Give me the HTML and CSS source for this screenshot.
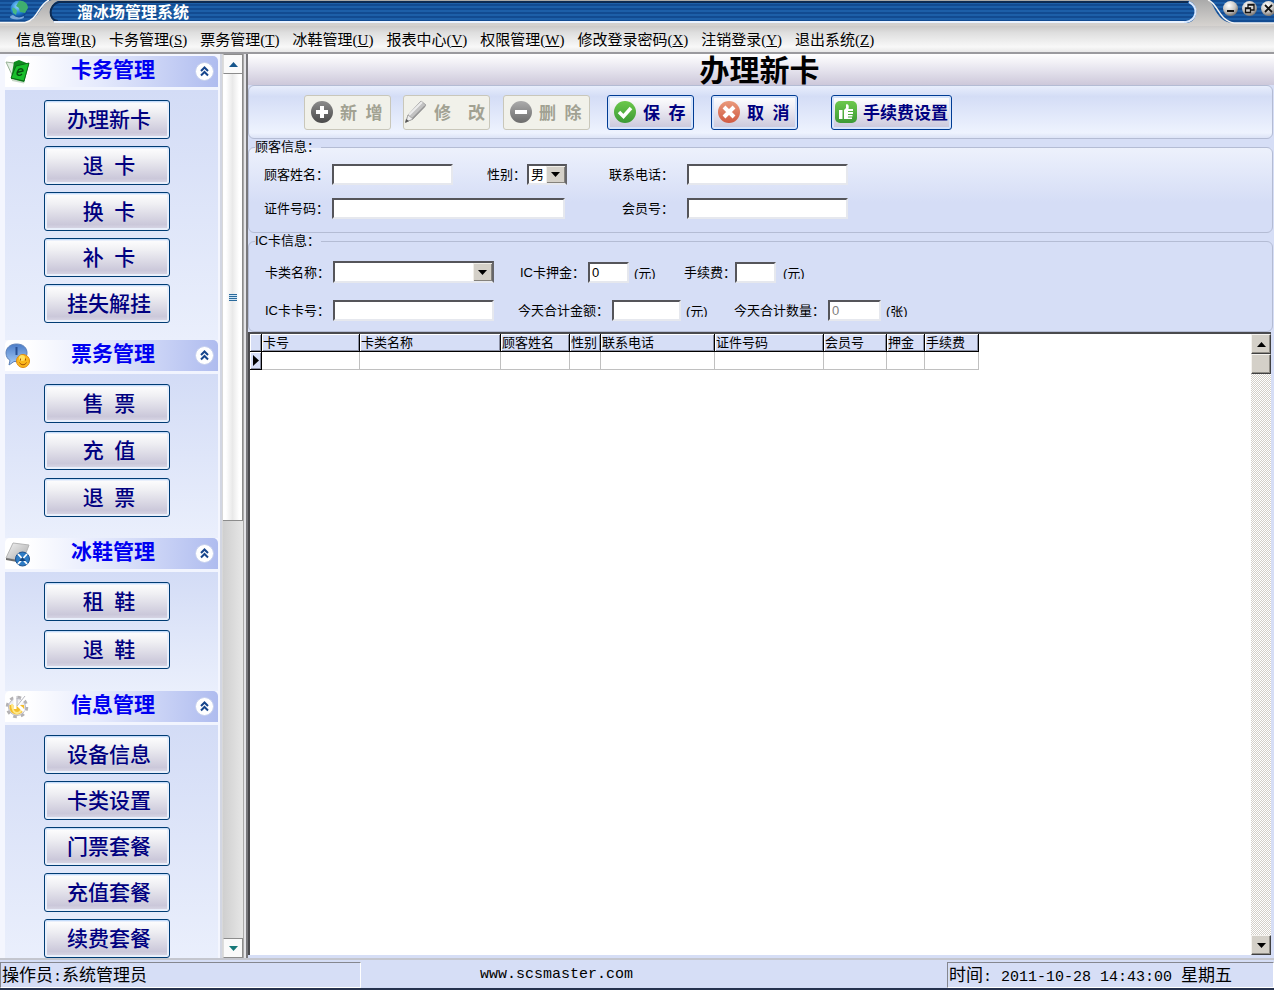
FILE: index.html
```html
<!DOCTYPE html>
<html lang="zh-CN">
<head>
<meta charset="utf-8">
<title>溜冰场管理系统</title>
<link rel="stylesheet" href="styles.css">
</head>
<body>
<svg width="0" height="0" class="defs" aria-hidden="true">
  <defs>
    <pattern id="stripes" width="4" height="4" patternUnits="userSpaceOnUse"><rect width="4" height="4" fill="#1d5fa8"/><rect width="4" height="2" fill="#124b91"/></pattern>
    <linearGradient id="metal" x1="0" y1="0" x2="0" y2="1"><stop offset="0" stop-color="#aaa"/><stop offset="1" stop-color="#d6d3d0"/></linearGradient>
    <radialGradient id="globe" cx=".4" cy=".35" r=".7"><stop offset="0" stop-color="#8fd8ff"/><stop offset=".6" stop-color="#1c7ad0"/><stop offset="1" stop-color="#0a3a80"/></radialGradient>
    <radialGradient id="ball" cx=".4" cy=".3" r=".7"><stop offset="0" stop-color="#fff"/><stop offset=".6" stop-color="#c9c7c4"/><stop offset="1" stop-color="#77736f"/></radialGradient>
    <linearGradient id="grayball" x1="0" y1="0" x2="0" y2="1"><stop offset="0" stop-color="#8c8c8c"/><stop offset="1" stop-color="#4a4a4a"/></linearGradient>
    <linearGradient id="grayball2" x1="0" y1="0" x2="0" y2="1"><stop offset="0" stop-color="#ababab"/><stop offset="1" stop-color="#6c6c6c"/></linearGradient>
    <linearGradient id="green" x1="0" y1="0" x2="0" y2="1"><stop offset="0" stop-color="#6cc84c"/><stop offset="1" stop-color="#3c9a35"/></linearGradient>
    <linearGradient id="red" x1="0" y1="0" x2="0" y2="1"><stop offset="0" stop-color="#ea9a7c"/><stop offset="1" stop-color="#d05a42"/></linearGradient>
    <linearGradient id="bubble" x1="0" y1="0" x2="0" y2="1"><stop offset="0" stop-color="#4a7cc8"/><stop offset="1" stop-color="#a9cdf5"/></linearGradient>
    <linearGradient id="sheet" x1="0" y1="0" x2="1" y2="1"><stop offset="0" stop-color="#f2f2f2"/><stop offset="1" stop-color="#a9a9a9"/></linearGradient>
    <symbol id="chev" viewBox="0 0 19 19"><circle cx="9.500" cy="9.500" r="9" fill="#fff" stroke="#c5cfee"/><path d="M6 9l3.500-3.500L13 9M6 13.500l3.500-3.500 3.500 3.500" fill="none" stroke="#16458c" stroke-width="2"/></symbol>
  </defs>
</svg>

<header class="titlebar">
  <svg class="cap" width="64" height="26" viewBox="0 0 64 26" aria-hidden="true">
    <rect width="64" height="26" fill="url(#stripes)"/>
    <path d="M52 0C41 2 39 20 27 22H0v4h64v-3h-6C48 22 48 4 58 1h6V0z" fill="url(#metal)"/>
    <path d="M0 22.500h25C38 20 38 5 49 0" fill="none" stroke="#f5f5f5" stroke-width="1.500"/>
    <path d="M64 2h-5C48 5 48 20 58 21" fill="none" stroke="#0d2b52" stroke-width="2"/>
    <path d="M54 22h10" stroke="#e9f2ff" stroke-width="2"/>
    <ellipse cx="17" cy="17" rx="7" ry="2.500" fill="#7aa6d8"/>
    <circle cx="19" cy="9" r="8.500" fill="url(#globe)"/>
    <path d="M19 1c4-1 9 2 9 7l-3 5-5-1-1-4-3-2z" fill="#3fae6e"/>
    <path d="M12 8c2-1 4 1 5 3l-1 4-3-2z" fill="#48b884"/>
  </svg>
  <h1 class="app-name">溜冰场管理系统</h1>
  <svg class="cap" width="90" height="26" viewBox="0 0 90 26" aria-hidden="true">
    <rect width="90" height="26" fill="url(#stripes)"/>
    <path d="M0 0h24c6 2 7 20 23 23h43v3H0v-3h2c12 0 14-19 3-22H0z" fill="url(#metal)"/>
    <path d="M0 2h4" stroke="#0d2b52" stroke-width="2"/>
    <path d="M0 22h2C13 20 15 7 5 2" fill="none" stroke="#d8e8ff" stroke-width="2"/>
    <path d="M24 0c10 3 10 20 26 23h40" fill="none" stroke="#f2f2f2" stroke-width="1.500"/>
  </svg>
  <div class="winbtns">
    <button type="button" aria-label="最小化"><svg width="17" height="17" viewBox="0 0 17 17"><circle cx="8.500" cy="8.500" r="7.500" fill="url(#ball)"/><path d="M5 11h7" stroke="#111" stroke-width="2"/></svg></button>
    <button type="button" aria-label="还原"><svg width="17" height="17" viewBox="0 0 17 17"><circle cx="8.500" cy="8.500" r="7.500" fill="url(#ball)"/><path d="M7 8V4.500h6V10h-3M4.500 8h5v4.500h-5zM7 5h6M4.500 8.500h5" fill="none" stroke="#111" stroke-width="1.300"/></svg></button>
    <button type="button" aria-label="关闭"><svg width="17" height="17" viewBox="0 0 17 17"><circle cx="8.500" cy="8.500" r="7.500" fill="url(#ball)"/><path d="M5 5l7 7M12 5l-7 7" stroke="#111" stroke-width="1.800"/></svg></button>
  </div>
</header>

<nav class="menu">
  <a href="#">信息管理(<u>R</u>)</a>
  <a href="#">卡务管理(<u>S</u>)</a>
  <a href="#">票务管理(<u>T</u>)</a>
  <a href="#">冰鞋管理(<u>U</u>)</a>
  <a href="#">报表中心(<u>V</u>)</a>
  <a href="#">权限管理(<u>W</u>)</a>
  <a href="#">修改登录密码(<u>X</u>)</a>
  <a href="#">注销登录(<u>Y</u>)</a>
  <a href="#">退出系统(<u>Z</u>)</a>
</nav>

<div class="work">
  <aside class="side">
    <section class="group">
      <div class="group-head">
        <svg width="26" height="26" viewBox="0 0 26 26" aria-hidden="true"><path d="M1 3l8 1 3 16-4-2z" fill="#e4efe4" stroke="#98b298"/><path d="M9 3l5-2 10 4-5 19-13-4z" fill="#0c8a1e"/><path d="M11 7l13-3-5 18-13-3z" fill="#18bf2c" stroke="#0a5c14" stroke-width=".8"/><path d="M12 13.500l6-1.500c0-3-4-3-5.500.5-1.500 4 2 5 4.500 2.500" fill="none" stroke="#064d10" stroke-width="1.400"/><path d="M7 20l12 3v1.500L7 22z" fill="#c9d8c9"/></svg>
        <h2>卡务管理</h2>
        <button type="button" class="fold" aria-label="折叠卡务管理"><svg width="19" height="19"><use href="#chev"/></svg></button>
      </div>
      <div class="group-body">
        <button type="button">办理新卡</button>
        <button type="button">退&ensp;卡</button>
        <button type="button">换&ensp;卡</button>
        <button type="button">补&ensp;卡</button>
        <button type="button">挂失解挂</button>
      </div>
    </section>
    <section class="group">
      <div class="group-head">
        <svg width="26" height="26" viewBox="0 0 26 26" aria-hidden="true"><path d="M11.500 1C5 1 1 5 1 10c0 4 2 6 4 7.500L4 22l5-3.500c8 1 13-3 13-8.500S18 1 11.500 1z" fill="url(#bubble)" stroke="#5b7fb8"/><path d="M11.500 4v8" stroke="#284f93" stroke-width="2"/><circle cx="18" cy="18" r="6.500" fill="#fbb81c" stroke="#dd8a12"/><circle cx="17" cy="15" r="3" fill="#ffe05e"/><path d="M15.500 15.500v2M20.500 15.500v2M14.500 19.500c1.500 3 5.500 3 7 0" fill="none" stroke="#a65408"/></svg>
        <h2>票务管理</h2>
        <button type="button" class="fold" aria-label="折叠票务管理"><svg width="19" height="19"><use href="#chev"/></svg></button>
      </div>
      <div class="group-body tickets">
        <button type="button">售&ensp;票</button>
        <button type="button">充&ensp;值</button>
        <button type="button">退&ensp;票</button>
      </div>
    </section>
    <section class="group">
      <div class="group-head">
        <svg width="26" height="26" viewBox="0 0 26 26" aria-hidden="true"><path d="M8 2l16 2-6 16-17-3z" fill="url(#sheet)" stroke="#b5b5b5"/><path d="M1 17l17 3v2L1 19z" fill="#6d6d6d"/><circle cx="17.500" cy="18" r="7" fill="#2d7bc4" stroke="#1d4f8c"/><path d="M13 13l9 10M22 13l-9 10" stroke="#fff" stroke-width="1.800"/><path d="M14 20h7l-3.500-4z" fill="#14457f"/></svg>
        <h2>冰鞋管理</h2>
        <button type="button" class="fold" aria-label="折叠冰鞋管理"><svg width="19" height="19"><use href="#chev"/></svg></button>
      </div>
      <div class="group-body skates">
        <button type="button">租&ensp;鞋</button>
        <button type="button">退&ensp;鞋</button>
      </div>
    </section>
    <section class="group">
      <div class="group-head">
        <svg width="26" height="26" viewBox="0 0 26 26" aria-hidden="true"><circle cx="12" cy="13" r="9.500" fill="none" stroke="#b4b2b4" stroke-width="3.500" stroke-dasharray="3.500 4"/><circle cx="12" cy="13" r="8.500" fill="#eeeef3" stroke="#b9b9c2"/><path d="M4.500 11h14.500a7 7 0 0 1-14.500 4z" fill="#f3bd2c"/><path d="M7 10c0 7 3 9 5 9s5-2 5-6" fill="none" stroke="#ffe98a" stroke-width="2"/><path d="M10 2v13M21 3l-8 8 6 6" fill="none" stroke="#fff" stroke-width="3"/><path d="M12 2v10l8-10" fill="none" stroke="#b8b8c0"/></svg>
        <h2>信息管理</h2>
        <button type="button" class="fold" aria-label="折叠信息管理"><svg width="19" height="19"><use href="#chev"/></svg></button>
      </div>
      <div class="group-body last">
        <button type="button">设备信息</button>
        <button type="button">卡类设置</button>
        <button type="button">门票套餐</button>
        <button type="button">充值套餐</button>
        <button type="button">续费套餐</button>
      </div>
    </section>
  </aside>

  <div class="sidescroll">
    <button type="button" aria-label="向上滚动"><svg width="9" height="5"><path d="M0 5l4.500-5L9 5z" fill="#17568c"/></svg></button>
    <div class="side-thumb"><i></i></div>
    <div class="side-track"></div>
    <button type="button" aria-label="向下滚动"><svg width="9" height="5"><path d="M0 0l4.500 5L9 0z" fill="#177878"/></svg></button>
  </div>

  <main class="main">
    <h2 class="page-title">办理新卡</h2>
    <div class="toolbar">
      <button type="button" disabled class="tool add"><svg width="24" height="24" viewBox="0 0 24 24" aria-hidden="true"><circle cx="12" cy="12" r="11" fill="url(#grayball)"/><path d="M12 6v12M6 12h12" stroke="#fff" stroke-width="4"/></svg><span>新&ensp;增</span></button>
      <button type="button" disabled class="tool edit"><svg width="24" height="24" viewBox="0 0 24 24" aria-hidden="true"><path d="M2 22l2-7L17 1l5 4L9 19z" fill="#c2c2c2" stroke="#a5a5a5"/><path d="M5 15L18 2" stroke="#ececec" stroke-width="2"/><path d="M8 19L21 6" stroke="#969696" stroke-width="1.500"/><path d="M4 15l5 4-7 3z" fill="#eee" stroke="#999" stroke-width=".7"/><path d="M1 23l1-4 3 2z" fill="#555"/></svg><span>修&emsp;改</span></button>
      <button type="button" disabled class="tool del"><svg width="24" height="24" viewBox="0 0 24 24" aria-hidden="true"><circle cx="12" cy="12" r="11" fill="url(#grayball2)"/><path d="M6 12h12" stroke="#fff" stroke-width="4"/></svg><span>删&ensp;除</span></button>
      <button type="button" class="tool save"><svg width="24" height="24" viewBox="0 0 24 24" aria-hidden="true"><circle cx="12" cy="12" r="11" fill="url(#green)"/><path d="M6 12l4.500 4.500L18 8" fill="none" stroke="#fff" stroke-width="3.500"/></svg><span>保&ensp;存</span></button>
      <button type="button" class="tool cancel"><svg width="24" height="24" viewBox="0 0 24 24" aria-hidden="true"><circle cx="12" cy="12" r="11" fill="url(#red)"/><path d="M7 7l10 10M17 7L7 17" stroke="#fff" stroke-width="4"/></svg><span>取&ensp;消</span></button>
      <button type="button" class="tool fee"><svg width="24" height="24" viewBox="0 0 24 24" aria-hidden="true"><rect x="1" y="1" width="22" height="22" rx="5" fill="url(#green)"/><path d="M5 10h3.500v9H5zM10 10l2-2V4.500c2-1 3.500 1 2.500 4.500H19v2h-5v1h5v2h-5v1h4.500v1.500H14v1h4V19h-8z" fill="#fff"/></svg><span>手续费设置</span></button>
    </div>

    <fieldset class="box customer">
      <legend>顾客信息：</legend>
      <div class="grid grid-customer">
        <label for="name">顾客姓名：</label><input id="name" class="w120">
        <label for="sex">性别：</label><select id="sex" class="w40"><option>男</option><option>女</option></select>
        <label for="tel" class="far">联系电话：</label><input id="tel" class="w161">
        <label for="idno">证件号码：</label><input id="idno" class="w233 span3">
        <label for="member" class="far">会员号：</label><input id="member" class="w161">
      </div>
    </fieldset>

    <fieldset class="box card">
      <legend>IC卡信息：</legend>
      <div class="grid grid-card1">
        <label for="kind">卡类名称：</label><select id="kind" class="w161 tall"><option></option></select>
        <label for="deposit">IC卡押金：</label><input id="deposit" class="w41" value="0"><span class="unit">(元)</span>
        <label for="fee" class="near">手续费：</label><input id="fee" class="w41"><span class="unit">(元)</span>
      </div>
      <div class="grid grid-card2">
        <label for="cardno">IC卡卡号：</label><input id="cardno" class="w161">
        <label for="sum">今天合计金额：</label><input id="sum" class="w69"><span class="unit">(元)</span>
        <label for="count">今天合计数量：</label><input id="count" class="w53" value="0" disabled><span class="unit">(张)</span>
      </div>
    </fieldset>

    <div class="sheet">
      <div class="sheet-area">
        <table>
          <colgroup><col class="c0"><col class="c1"><col class="c2"><col class="c3"><col class="c4"><col class="c5"><col class="c6"><col class="c7"><col class="c8"><col class="c9"></colgroup>
          <thead><tr><th></th><th>卡号</th><th>卡类名称</th><th>顾客姓名</th><th>性别</th><th>联系电话</th><th>证件号码</th><th>会员号</th><th>押金</th><th>手续费</th></tr></thead>
          <tbody><tr><th><svg width="6" height="11"><path d="M0 0l6 5.500L0 11z" fill="#000"/></svg></th><td></td><td></td><td></td><td></td><td></td><td></td><td></td><td></td><td></td></tr></tbody>
        </table>
      </div>
      <div class="classic-scroll">
        <button type="button" aria-label="向上"><svg width="9" height="5"><path d="M0 5l4.500-5L9 5z"/></svg></button>
        <div class="classic-thumb"></div>
        <div class="classic-track"></div>
        <button type="button" aria-label="向下"><svg width="9" height="5"><path d="M0 0l4.500 5L9 0z"/></svg></button>
      </div>
    </div>
  </main>
</div>

<footer class="status">
  <div class="cell operator">操作员<span class="mono">:</span>系统管理员</div>
  <div class="site mono">www.scsmaster.com</div>
  <div class="cell clock">时间<span class="mono">: 2011-10-28 14:43:00 </span>星期五</div>
</footer>
</body>
</html>
```
FILE: styles.css
```css
* { box-sizing: border-box; }
body {
  margin: 0;
  min-height: 100vh;
  display: flex;
  flex-direction: column;
  background: #d6def6;
  color: #000;
  font: 13px/17px "Liberation Sans", "Noto Sans CJK SC", sans-serif;
}
h1, h2 { margin: 0; }
button { font: inherit; cursor: pointer; }
.defs { position: absolute; }

/* title bar */
.titlebar { position: relative; display: flex; height: 26px; overflow: hidden; }
.cap { flex: none; display: block; }
.app-name {
  flex: 1;
  padding-left: 13px;
  background:
    linear-gradient(#a8a8a8 0 1px, #0d2b52 1px 3px, transparent 3px 21px, #e9f2ff 21px 23px, #d3d0cd 23px),
    repeating-linear-gradient(#124b91 0 2px, #1d5fa8 2px 4px);
  color: #fff;
  font: bold 16px/22px "Noto Sans CJK SC", sans-serif;
}
.winbtns { position: absolute; right: -3px; top: 0; display: flex; gap: 2px; }
.winbtns button { padding: 0; border: 0; background: none; line-height: 0; }

/* menu */
.menu {
  display: flex;
  gap: 13px;
  height: 28px;
  padding: 2px 16px 0;
  background: linear-gradient(#cbc9c8, #dedede 25%, #f8f8f8 80%, #e8e8e8);
  border-bottom: 2px solid #9a9a9e;
  font: 15px/24px "Liberation Serif", "Noto Sans CJK SC", serif;
}
.menu a { color: #000; text-decoration: none; white-space: nowrap; }

/* side bar */
.work { flex: 1; display: flex; }
.side { width: 222px; padding: 2px 2px 0 5px; background: #f4f6fe; border-right: 2px solid #d2d6e2; }
.group-head {
  display: flex;
  align-items: center;
  height: 31px;
  padding-right: 4px;
  border-radius: 5px 5px 0 0;
  background: linear-gradient(90deg, #fff 10%, #e4e9fc 45%, #afbcef);
}
.group-head h2 {
  flex: 1;
  padding-bottom: 7px;
  text-align: center;
  color: #0000f0;
  font: bold 21px/24px "Noto Sans CJK SC", sans-serif;
}
.group-head svg { flex: none; display: block; }
.fold { padding: 0; border: 0; background: none; }
.group-body {
  display: flex;
  flex-direction: column;
  align-items: center;
  gap: 7px;
  padding: 10px 9px 17px 0;
  border-top: 3px solid #f1f4fe;
  background: linear-gradient(#d3dcf6, #eaeffc);
}
.group-body.tickets { gap: 8px; padding-bottom: 21px; }
.group-body.skates { gap: 9px; padding-bottom: 22px; }
.group-body.last { padding-bottom: 0; }
.group-body button {
  width: 126px;
  height: 39px;
  padding: 0 0 3px 4px;
  border: 1px solid #003c74;
  border-radius: 3px;
  background: linear-gradient(#fff, #efeff3 30%, #cbc8da 85%, #dcdae8);
  box-shadow: inset 0 1px #c4dcfa, inset 0 0 0 2px #e9effb;
  color: #000080;
  font: 500 21px/24px "Noto Sans CJK SC", sans-serif;
}

.sidescroll {
  width: 26px;
  display: flex;
  flex-direction: column;
  padding: 0 5px 0 1px;
  background: linear-gradient(90deg, #d8d8d8 21px, #aaa 21px 22px, #e4e4e8 22px 24px, #77777b 24px);
}
.sidescroll button {
  height: 20px;
  padding: 0;
  border: 1px solid #8c8c8c;
  border-left-color: #ddd;
  background: #fafafa;
  line-height: 0;
}
.side-thumb {
  flex: 446;
  display: flex;
  align-items: center;
  justify-content: center;
  border: solid #8c8c8c;
  border-width: 0 1px 1px 0;
  background: linear-gradient(90deg, #fff 15%, #e9e9e9 50%, #fff 85%);
}
.side-thumb i { width: 8px; height: 7px; background: repeating-linear-gradient(#2a6a9c 0 1px, #cfe4f4 1px 2px); }
.side-track { flex: 417; background: linear-gradient(90deg, #cfcfcf, #e6e6e6); }

/* main panel */
.main { flex: 1; min-width: 0; display: flex; flex-direction: column; }
.page-title {
  height: 31px;
  padding-right: 3px;
  background: linear-gradient(#fff, #e6e4ee 50%, #cdc8da);
  text-align: center;
  font: bold 30px/28px "Noto Sans CJK SC", sans-serif;
}
.toolbar {
  display: flex;
  align-items: center;
  height: 54px;
  margin-right: 1px;
  padding-left: 55px;
  border: 1px solid #b4bcd4;
  border-radius: 6px;
  background: linear-gradient(#e8eefc, #d4ddf6 20%, #eef3fe 90%, #dce3f6);
}
.tool {
  display: flex;
  align-items: center;
  gap: 6px;
  flex: none;
  width: 87px;
  height: 35px;
  padding: 0 0 1px 5px;
  border: 1px solid #003c94;
  border-radius: 3px;
  background: linear-gradient(#fff, #ecebf3 40%, #c9c6da);
  box-shadow: inset 0 0 0 2px #d6e4fb;
  color: #000080;
  font: bold 17px/22px "Noto Sans CJK SC", sans-serif;
  white-space: nowrap;
}
.tool svg { flex: none; }
.tool:disabled { border-color: #c9c7ba; background: #f1f1ea; box-shadow: none; color: #a1a192; }
.edit { margin-left: 12px; padding-left: 0; }
.del { margin-left: 13px; }
.save, .cancel { margin-left: 17px; }
.fee { width: 121px; margin-left: 33px; padding-left: 2px; gap: 5px; }

.box {
  min-width: 0;
  margin: 0 1px 0 0;
  padding: 0 0 0 14px;
  border: 1px solid #b4bcd4;
  border-radius: 6px;
}
.customer { background: linear-gradient(#edf1fc, #d5ddf6 65%); }
.box legend { margin-left: -8px; padding: 0; width: 66px; height: 17px; white-space: nowrap; line-height: 15px; }
.customer .grid { padding: 8px 0 13px; row-gap: 13px; }
.grid { display: grid; align-items: center; }
.grid > label { padding-right: 3px; text-align: right; white-space: nowrap; line-height: 19px; }
.grid > .far { padding-right: 13px; }
.grid > .near { padding-right: 0; }
.grid-customer { grid-template-columns: 69px 155px 40px 82px 78px 1fr; }
.grid-card1 { grid-template-columns: 70px 183px 72px 46px 50px 51px 48px 1fr; padding-top: 11px; }
.grid-card2 { grid-template-columns: 70px 183px 96px 74px 46px 96px 58px 1fr; padding: 17px 0 10px; }
.span3 { grid-column: span 3; }
input, select {
  height: 21px;
  margin: 0;
  padding: 0 2px;
  border: 2px solid;
  border-color: #55555a #e6e8ee #e6e8ee #55555a;
  border-radius: 0;
  background: #fff;
  color: #000;
  font: 13px/17px "Liberation Sans", "Noto Sans CJK SC", sans-serif;
}
input:disabled { color: #808080; }
/* arrow, button face, shadow and highlight of the drop-downs */
select {
  appearance: none;
  border-right-color: #66666a;
  background:
    url("data:image/svg+xml,%3Csvg xmlns='http://www.w3.org/2000/svg' width='9' height='5'%3E%3Cpath d='M0 0h9L4.500 5z'/%3E%3C/svg%3E") right 5px center no-repeat,
    linear-gradient(#d4d0c8, #d4d0c8) right 1px top 1px / 17px calc(100% - 2px) no-repeat,
    linear-gradient(#85827c, #85827c) right bottom / 18px calc(100% - 1px) no-repeat,
    linear-gradient(#f0eee8, #f0eee8) right / 19px 100% no-repeat,
    #fff;
}
.tall { height: 22px; }
.w40 { width: 40px; }
.w41 { width: 41px; }
.w53 { width: 53px; }
.w69 { width: 69px; }
.w120 { width: 121px; }
.w161 { width: 161px; }
.w233 { width: 233px; }
.unit { height: 13px; overflow: hidden; line-height: 15px; }

/* data grid */
.sheet {
  flex: 1;
  display: flex;
  margin: 0 3px 3px 0;
  border: solid #4a4a4e;
  border-width: 2px 0 0 2px;
  background: #fff;
}
.sheet-area { flex: 1; }
table { table-layout: fixed; width: 729px; border-collapse: separate; border-spacing: 0; }
th, td { height: 18px; padding: 0; border: solid #c0c0c0; border-width: 0 1px 1px 0; }
th {
  border-color: #000;
  background: #d6def6;
  box-shadow: inset 1px 1px #fff, inset -1px -1px #8b90a4;
  font-weight: normal;
  text-align: left;
  line-height: 17px;
  padding-left: 1px;
  white-space: nowrap;
}
tbody th { line-height: 0; padding-left: 3px; }
.c0 { width: 12px; } .c1 { width: 98px; } .c2 { width: 141px; } .c3 { width: 69px; } .c4 { width: 31px; }
.c5 { width: 114px; } .c6 { width: 109px; } .c7 { width: 63px; } .c8 { width: 38px; } .c9 { width: 54px; }
.classic-scroll { width: 20px; display: flex; flex-direction: column; }
.classic-scroll button, .classic-thumb {
  height: 20px;
  padding: 0;
  border: 1px solid;
  border-color: #f4f2ee #404040 #404040 #f4f2ee;
  background: #d4d0c8;
  box-shadow: inset -1px -1px #908d86;
  line-height: 0;
}
.classic-track { flex: 1; background: repeating-conic-gradient(#fff 0 25%, #d4d0c8 0 50%) 0 0 / 2px 2px; }

/* status bar */
.status {
  display: flex;
  height: 32px;
  padding-top: 2px;
  border-top: 2px solid #c4c6ce;
  border-bottom: 2px solid #26324e;
  background: #d6def6;
  font: 17px/24px "Noto Sans CJK SC", sans-serif;
  white-space: nowrap;
}
.cell { border: 1px solid; border-color: #85878f #fff #fff #85878f; padding-left: 1px; line-height: 22px; }
.operator { width: 361px; }
.site { flex: 1; padding-left: 119px; line-height: 26px; }
.clock { width: 327px; white-space: pre; }
.mono { font-family: "Liberation Mono", monospace; font-size: 15px; }
```
